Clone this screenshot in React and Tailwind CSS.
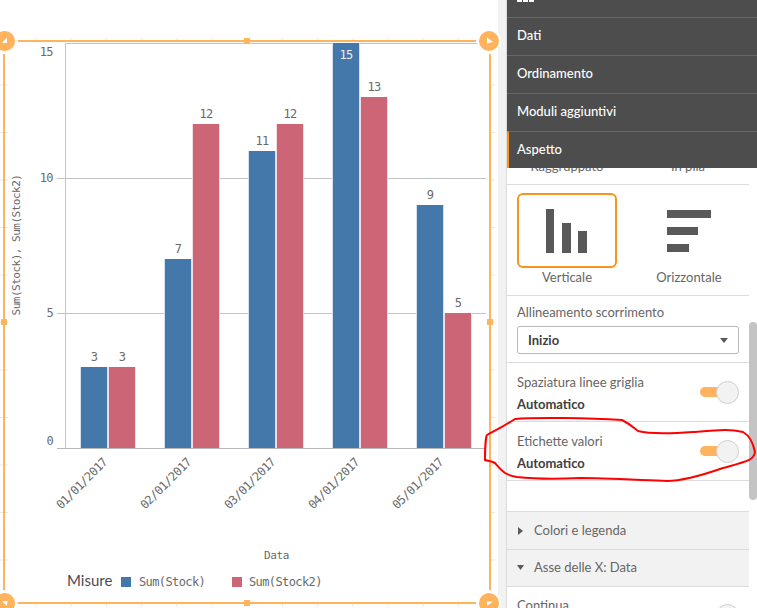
const MONO = "font-['DejaVu_Sans_Mono',monospace]";
const CHART_TEXT = `${MONO} text-[12px] tracking-[-0.6px] fill-[#6a6a6a]`;

const BARS = [
  { date: '01/01/2017', x: 81, stock: 3, stock2: 3 },
  { date: '02/01/2017', x: 165, stock: 7, stock2: 12 },
  { date: '03/01/2017', x: 249, stock: 11, stock2: 12 },
  { date: '04/01/2017', x: 333, stock: 15, stock2: 13 },
  { date: '05/01/2017', x: 417, stock: 9, stock2: 5 },
];

const BASE_Y = 448;
const UNIT = 27;

function Bar({ x, value, fill, edge }) {
  const h = value * UNIT;
  const top = BASE_Y - h;
  const inside = value === 15;
  return (
    <g>
      <rect x={x - 1} y={top} width={28} height={h} fill={edge} />
      <rect x={x} y={top} width={26} height={h} fill={fill} />
      <text
        x={x + 13}
        y={inside ? top + 16 : top - 6}
        textAnchor="middle"
        className={inside ? `${MONO} text-[12px] tracking-[-0.6px] fill-[#eeeeee]` : CHART_TEXT}
      >
        {value}
      </text>
    </g>
  );
}

function Chart() {
  const hTicks = Array.from({ length: 13 }, (_, i) => 36 + i * 35.2);
  const vTicks = Array.from({ length: 11 }, (_, i) => 85 + i * 47.5);
  return (
    <svg width="498" height="608" className="block overflow-visible relative z-10">
      {/* faint drag grid around the frame */}
      {hTicks.map(x => (
        <g key={x}>
          <line x1={x} x2={x} y1={38} y2={40} stroke="#f3e6d6" />
          <line x1={x} x2={x} y1={604} y2={607} stroke="#f3e6d6" />
        </g>
      ))}
      {vTicks.map(y => (
        <g key={y}>
          <line x1={0} x2={3} y1={y} y2={y} stroke="#f3e6d6" />
          <line x1={5} x2={8} y1={y} y2={y} stroke="#f3e6d6" />
          <line x1={491} x2={495} y1={y} y2={y} stroke="#f3e6d6" />
        </g>
      ))}

      {/* axes and grid */}
      <line x1={65.5} x2={65.5} y1={43} y2={448} stroke="#c4c4c4" />
      <line x1={65} x2={486} y1={43.5} y2={43.5} stroke="#c4c4c4" />
      <line x1={57} x2={486} y1={178.5} y2={178.5} stroke="#c4c4c4" />
      <line x1={57} x2={486} y1={313.5} y2={313.5} stroke="#c4c4c4" />
      <line x1={57} x2={486} y1={448.5} y2={448.5} stroke="#b8b8b8" />

      {[['15', 56], ['10', 182], ['5', 317], ['0', 445]].map(([label, y]) => (
        <text key={label} x={53} y={y} textAnchor="end" className={CHART_TEXT}>
          {label}
        </text>
      ))}

      {BARS.map(b => (
        <g key={b.date}>
          <Bar x={b.x} value={b.stock} fill="#4477aa" edge="#d5e1ec" />
          <Bar x={b.x + 28} value={b.stock2} fill="#cc6677" edge="#f3dde1" />
          <text
            x={b.x + 27}
            y={463}
            textAnchor="end"
            transform={`rotate(-45 ${b.x + 27} 463)`}
            className={CHART_TEXT}
          >
            {b.date}
          </text>
        </g>
      ))}

      <text
        x={20}
        y={245}
        textAnchor="middle"
        transform="rotate(-90 20 245)"
        className={`${MONO} text-[11px] tracking-[-0.5px] fill-[#6a6a6a]`}
      >
        Sum(Stock), Sum(Stock2)
      </text>
      <text x={276.5} y={559} textAnchor="middle" className={`${MONO} text-[11px] tracking-[-0.4px] fill-[#6a6a6a]`}>
        Data
      </text>

      {/* legend */}
      <text x={67} y={586} className="font-['Lato',sans-serif] text-[15px] fill-[#4a4a55]">Misure</text>
      <rect x={121} y={577} width={10} height={10} fill="#4477aa" />
      <text x={139} y={586} className={CHART_TEXT}>Sum(Stock)</text>
      <rect x={232} y={577} width={10} height={10} fill="#cc6677" />
      <text x={249} y={586} className={CHART_TEXT}>Sum(Stock2)</text>

      {/* selection frame */}
      <rect x={18} y={40} width={458} height={2} fill="#ffb35c" />
      <rect x={18} y={602} width={458} height={2} fill="#ffb35c" />
      <rect x={3} y={54} width={2} height={536} fill="#ffb35c" />
      <rect x={489} y={54} width={2} height={536} fill="#ffb35c" />
      <rect x={244} y={38} width={6} height={6} fill="#ffb35c" />
      <rect x={244} y={600} width={6} height={6} fill="#ffb35c" />
      <rect x={1} y={319} width={6} height={6} fill="#ffb35c" />
      <rect x={487} y={319} width={6} height={6} fill="#ffb35c" />
      {[
        [5, 41, '2,43 7,37.5 7,43'],
        [489, 41, '487,37.5 493,42 487,43.5'],
        [5, 603, '2,601 7.5,601 7,606'],
        [489, 603, '487,601.5 493,601.5 487,606'],
      ].map(([cx, cy, pts]) => (
        <g key={pts}>
          <circle cx={cx} cy={cy} r={12} fill="#fff" />
          <circle cx={cx} cy={cy} r={10} fill="#ffb35c" />
          <polygon points={pts} fill="#fff" />
        </g>
      ))}
    </svg>
  );
}

function NavRow({ label, active }) {
  return (
    <div className={`h-[38px] pb-[2px] flex items-center border-t border-[#666666] text-[13px] font-medium text-white ${active ? 'border-l-[2px] border-l-[#f7941d] pl-[8px]' : 'pl-[10px]'}`}>
      {label}
    </div>
  );
}

function ToggleRow({ label }) {
  return (
    <div className="h-[59px] shrink-0 border-b border-[#dcdcdc] pl-[10px] pr-[10px] flex items-center justify-between">
      <div className="flex flex-col gap-[5px] pt-[2px]">
        <span className="text-[13px] leading-[17px] text-[#666666]">{label}</span>
        <span className="text-[13px] leading-[17px] font-bold text-[#404040]">Automatico</span>
      </div>
      <div className="flex items-center">
        <div className="w-[26px] h-[10px] rounded-full bg-[#ffb35c]" />
        <div className="w-[23px] h-[23px] -ml-[10px] rounded-full border border-[#cfcfcf] bg-[#f2f2f2]" />
      </div>
    </div>
  );
}

function SectionHeader({ label, open, className }) {
  return (
    <div className={`flex items-center gap-[10px] pl-[10px] bg-[#f2f2f2] border-b border-[#dcdcdc] text-[13px] text-[#666666] ${className}`}>
      <svg width="7" height="8" viewBox="0 0 7 8" className="shrink-0">
        {open
          ? <polygon points="0,1 7,1 3.5,6" fill="#595959" />
          : <polygon points="1,0 6,4 1,8" fill="#595959" />}
      </svg>
      <span>{label}</span>
    </div>
  );
}

function Panel() {
  return (
    <div className="w-[250px] h-[608px] flex flex-col">
      <div className="h-[168px] shrink-0 bg-[#4d4d4d] overflow-hidden">
        <div className="h-[17px] pl-[10px] flex gap-[1px]">
          <div className="w-[5px] h-[2px] bg-white" />
          <div className="w-[5px] h-[2px] bg-white" />
          <div className="w-[5px] h-[2px] bg-white" />
        </div>
        <NavRow label="Dati" />
        <NavRow label="Ordinamento" />
        <NavRow label="Moduli aggiuntivi" />
        <NavRow label="Aspetto" active />
      </div>

      <div className="flex flex-1 min-h-0">
        <div className="w-[242px] flex flex-col overflow-hidden bg-white">
          <div className="h-[17px] shrink-0 overflow-hidden border-b border-[#dcdcdc] flex text-[13px] text-[#666666]">
            <div className="w-[120px] text-center -mt-[10px] leading-[16px]">Raggruppato</div>
            <div className="w-[122px] text-center -mt-[10px] leading-[16px]">In pila</div>
          </div>

          <div className="h-[111px] shrink-0 border-b border-[#dcdcdc] pl-[10px] pt-[8px] flex gap-[22px] text-[13px] text-[#666666]">
            <div className="w-[100px] flex flex-col items-center">
              <div className="w-[100px] h-[75px] rounded-[6px] border-2 border-[#f7941d] flex items-center justify-center">
                <svg width="42" height="44" viewBox="0 0 42 44">
                  <rect x="0" y="0" width="8" height="44" fill="#595959" />
                  <rect x="16" y="14" width="9" height="30" fill="#595959" />
                  <rect x="32" y="22" width="9" height="22" fill="#595959" />
                </svg>
              </div>
              <span className="mt-[1px] leading-[17px]">Verticale</span>
            </div>
            <div className="w-[100px] flex flex-col items-center">
              <div className="w-[100px] h-[75px] flex items-center justify-center">
                <svg width="44" height="42" viewBox="0 0 44 42">
                  <rect x="0" y="0" width="44" height="8" fill="#595959" />
                  <rect x="0" y="17" width="31" height="8" fill="#595959" />
                  <rect x="0" y="34" width="22" height="8" fill="#595959" />
                </svg>
              </div>
              <span className="mt-[1px] leading-[17px]">Orizzontale</span>
            </div>
          </div>

          <div className="h-[67px] shrink-0 border-b border-[#dcdcdc] pl-[10px] pr-[10px] pt-[8px]">
            <div className="text-[13px] leading-[17px] text-[#666666]">Allineamento scorrimento</div>
            <div className="mt-[5px] h-[28px] pt-[1px] rounded-[3px] border border-[#b8b8b8] flex items-center justify-between pl-[10px] pr-[10px]">
              <span className="text-[13px] font-bold text-[#404040]">Inizio</span>
              <svg width="8" height="5" viewBox="0 0 8 5">
                <polygon points="0,0 8,0 4,5" fill="#595959" />
              </svg>
            </div>
          </div>

          <ToggleRow label="Spaziatura linee griglia" />
          <ToggleRow label="Etichette valori" />

          <div className="h-[30px] shrink-0" />
          <SectionHeader label="Colori e legenda" className="h-[39px] shrink-0 border-t" />
          <SectionHeader label="Asse delle X: Data" open className="h-[37px] shrink-0" />

          <div className="pl-[10px] pr-[10px] pt-[10px] flex justify-between shrink-0">
            <span className="text-[13px] leading-[17px] text-[#666666]">Continua</span>
            <div className="w-[23px] h-[23px] mt-[7px] rounded-full border border-[#cfcfcf] bg-[#f2f2f2]" />
          </div>
        </div>

        <div className="w-[8px] bg-white">
          <div className="mt-[154px] h-[178px] rounded-full bg-[#c4c4c4]" />
        </div>
      </div>
    </div>
  );
}

export default function App() {
  return (
    <div className="relative w-[757px] h-[608px] overflow-hidden flex bg-white font-['Lato',sans-serif]">
      <div className="w-[498px] h-[608px] bg-white shrink-0">
        <Chart />
      </div>
      <div className="w-[9px] h-[608px] shrink-0 bg-[#f2f2f2] border-r border-[#dcdcdc]" />
      <Panel />

      {/* hand drawn red marker around the value labels option */}
      <svg width="757" height="608" className="absolute inset-0 z-20 pointer-events-none">
        <path
          d="M485 460 C485 448 486 436 487 435 C494 431 501 428 515 419 C535 417 590 418 622 420 C630 424 635 429 638 431 C650 434 665 434 693 432 C720 430 730 429 743 432 C752 437 754 447 755 452 C754 460 748 461 723 468 C700 476 680 481 667 481 C640 480 600 478 580 478 C560 479 535 479 517 477 C505 475 503 472 495 463 C491 461 488 461 485 460 Z"
          fill="none"
          stroke="#ff0000"
          strokeWidth="2"
        />
      </svg>
    </div>
  );
}
